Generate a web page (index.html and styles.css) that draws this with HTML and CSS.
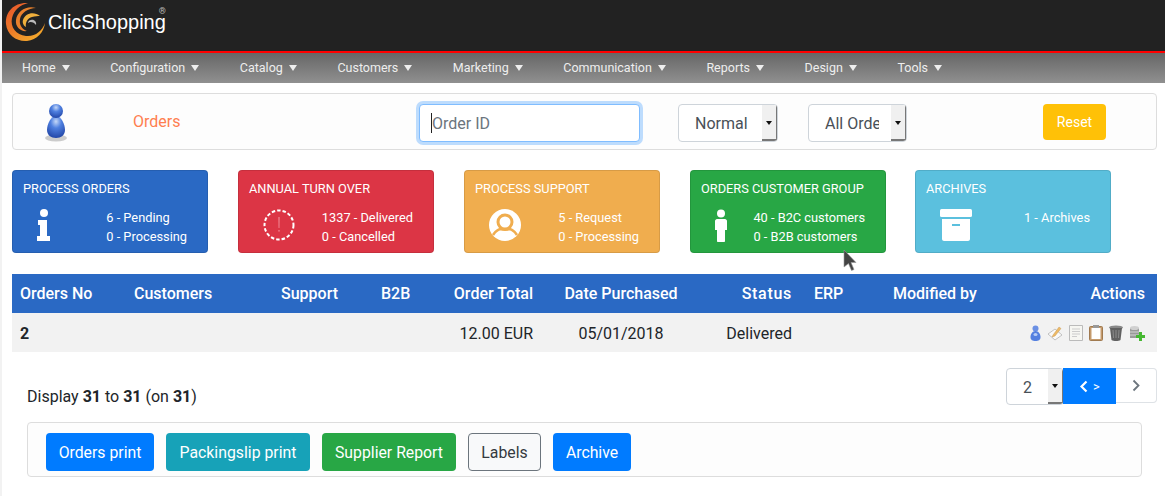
FILE: index.html
```html
<!DOCTYPE html>
<html lang="en">
<head>
    <meta charset="UTF-8">
    <meta name="viewport" content="width=device-width, initial-scale=1.0">
    <title>ClicShopping - Orders</title>
    <link rel="stylesheet" href="styles.css">
</head>
<body>
    <header class="topbar">
        <svg class="logo-mark" width="42" height="41" viewBox="0 0 42 41">
            <defs>
                <linearGradient id="swirl" x1="0" y1="0" x2="0.7" y2="1">
                    <stop offset="0" stop-color="#e8542c"/>
                    <stop offset="0.55" stop-color="#ec7a28"/>
                    <stop offset="1" stop-color="#f3a92c"/>
                </linearGradient>
            </defs>
            <path d="M24 2C11 1 1 10 2 23c1 11 11 18 21 17 10-1 17-9 18-18-3 8-10 14-19 13C12 34 6 26 8 17 10 9 16 4 24 2z" fill="url(#swirl)"/>
            <path d="M32 7C23 4 13 10 12 19c-1 7 5 12 11 11-5-2-8-6-7-12 1-6 8-11 16-11z" fill="#e9802c"/>
            <path d="M36 15c-6-5-15-3-17 4-1 3 1 6 3 7-1-5 2-9 6-10 3-1 6-1 8-1z" fill="#f0b03c"/>
            <path d="M32 24c1-3-2-6-5-5-2 0-3 2-3 3 2-2 6-1 8 2z" fill="#bbb"/>
        </svg>
        <span class="logo-text">ClicShopping</span>
        <span class="logo-reg">®</span>
    </header>
    <nav class="mainnav">
        <a href="#">Home</a>
        <a href="#">Configuration</a>
        <a href="#">Catalog</a>
        <a href="#">Customers</a>
        <a href="#">Marketing</a>
        <a href="#">Communication</a>
        <a href="#">Reports</a>
        <a href="#">Design</a>
        <a href="#">Tools</a>
    </nav>

    <main class="content">
        <div class="filterbar">
            <svg class="orders-icon" width="24" height="38" viewBox="0 0 24 38">
                <defs>
                    <radialGradient id="blueball" cx="0.5" cy="0.25" r="0.75">
                        <stop offset="0" stop-color="#c5d8f8"/>
                        <stop offset="0.4" stop-color="#4f80e0"/>
                        <stop offset="1" stop-color="#2347a8"/>
                    </radialGradient>
                </defs>
                <ellipse cx="12" cy="34" rx="11" ry="3.500" fill="#ccc"/>
                <path d="M12 12c5 0 9 8 9 14 0 5-4 8-9 8s-9-3-9-8c0-6 4-14 9-14z" fill="url(#blueball)"/>
                <circle cx="12" cy="7" r="7" fill="url(#blueball)"/>
            </svg>
            <h1 class="page-title">Orders</h1>
            <div class="search-wrap">
                <input class="search-input" type="text" placeholder="Order ID">
                <span class="caret"></span>
            </div>
            <div class="fake-select select-normal"><span class="select-value">Normal</span><span class="select-arrow"></span></div>
            <div class="fake-select select-all"><span class="select-value">All Orders</span><span class="select-arrow"></span></div>
            <a href="#" class="btn btn-warning btn-reset">Reset</a>
        </div>

        <section class="stats">
            <div class="stat stat-blue">
                <div class="stat-title">Process Orders</div>
                <div class="stat-row">
                    <div class="stat-icon">
                        <svg width="13" height="32" viewBox="0 0 13 32" fill="#fff">
                            <circle cx="7" cy="4" r="4"/>
                            <path d="M1 11h9v16h3v5H0v-5h3V16H1z"/>
                        </svg>
                    </div>
                    <div class="stat-text"><div>6 - Pending</div><div>0 - Processing</div></div>
                </div>
            </div>
            <div class="stat stat-red">
                <div class="stat-title">Annual Turn Over</div>
                <div class="stat-row">
                    <div class="stat-icon stat-icon-wide">
                        <svg width="32" height="32" viewBox="0 0 32 32">
                            <circle cx="16" cy="16" r="14.500" fill="none" stroke="#fff" stroke-width="2" stroke-dasharray="3.500 2"/>
                            <path d="M15.300 8h1.400l-.2 11h-1z" fill="#ee7f8a"/>
                            <rect x="15.300" y="21" width="1.400" height="1.600" fill="#ee7f8a"/>
                        </svg>
                    </div>
                    <div class="stat-text"><div>1337 - Delivered</div><div>0 - Cancelled</div></div>
                </div>
            </div>
            <div class="stat stat-orange">
                <div class="stat-title">Process Support</div>
                <div class="stat-row">
                    <div class="stat-icon stat-icon-wide">
                        <svg width="32" height="32" viewBox="0 0 32 32">
                            <circle cx="16" cy="16" r="16" fill="#fff"/>
                            <circle cx="16" cy="13" r="7" fill="none" stroke="#f0ad4e" stroke-width="3"/>
                            <path d="M4 26c3-5 7-6 8-6 1 1 7 1 8 0 1 0 5 1 8 6" fill="none" stroke="#f0ad4e" stroke-width="2.500"/>
                        </svg>
                    </div>
                    <div class="stat-text"><div>5 - Request</div><div>0 - Processing</div></div>
                </div>
            </div>
            <div class="stat stat-green">
                <div class="stat-title">Orders Customer Group</div>
                <div class="stat-row">
                    <div class="stat-icon">
                        <svg width="12" height="33" viewBox="0 0 12 33" fill="#fff">
                            <circle cx="6" cy="4.500" r="4"/>
                            <path d="M2 10h8c1 0 2 1 2 2v9h-2v11c0 .6-.4 1-1 1H3c-.6 0-1-.4-1-1V21H0v-9c0-1 1-2 2-2z"/>
                        </svg>
                    </div>
                    <div class="stat-text"><div>40 - B2C customers</div><div>0 - B2B customers</div></div>
                </div>
            </div>
            <div class="stat stat-cyan">
                <div class="stat-title">Archives</div>
                <div class="stat-row">
                    <div class="stat-icon stat-icon-wide">
                        <svg width="32" height="32" viewBox="0 0 32 32" fill="#fff">
                            <rect x="0" y="0" width="32" height="8" rx="1.500"/>
                            <path d="M2 10h28v20c0 1-1 2-2 2H4c-1 0-2-1-2-2z"/>
                            <rect x="12" y="15" width="8" height="2" fill="#5bc0de"/>
                        </svg>
                    </div>
                    <div class="stat-text"><div>1 - Archives</div></div>
                </div>
            </div>
        </section>

        <table class="orders">
            <colgroup>
                <col class="col-no"><col class="col-cust"><col class="col-support"><col class="col-b2b">
                <col class="col-total"><col class="col-date"><col class="col-status"><col class="col-erp">
                <col class="col-mod"><col class="col-actions">
            </colgroup>
            <thead>
                <tr>
                    <th>Orders No</th>
                    <th>Customers</th>
                    <th>Support</th>
                    <th>B2B</th>
                    <th class="right">Order Total</th>
                    <th class="center">Date Purchased</th>
                    <th class="right th-status">Status</th>
                    <th>ERP</th>
                    <th>Modified by</th>
                    <th class="right cell-actions">Actions</th>
                </tr>
            </thead>
            <tbody>
                <tr>
                    <td class="order-no">2</td>
                    <td></td>
                    <td></td>
                    <td></td>
                    <td class="right">12.00 EUR</td>
                    <td class="center">05/01/2018</td>
                    <td class="right">Delivered</td>
                    <td></td>
                    <td></td>
                    <td class="right cell-actions">
                        <div class="actions">
                            <svg width="11" height="16" viewBox="0 0 11 16">
                                <circle cx="5.500" cy="3.500" r="3" fill="#6b90e4"/>
                                <path d="M5.500 6c3 0 5 3 5 6 0 3-2 4-5 4s-5-1-5-4c0-3 2-6 5-6z" fill="#5480e0"/>
                                <ellipse cx="5.500" cy="9.500" rx="2" ry="1.500" fill="#b8cdf4"/>
                            </svg>
                            <svg width="16" height="16" viewBox="0 0 16 16">
                                <path d="M1 9l7-5 7 6-7 5z" fill="#fafafa" stroke="#b4b4b4" stroke-width=".8"/>
                                <path d="M6 10l6-8 2 1.500-6 7.500-3 1z" fill="#eebb66" stroke="#c09050" stroke-width=".4"/>
                            </svg>
                            <svg width="14" height="16" viewBox="0 0 14 16">
                                <path d="M.5.5h13v15H.5z" fill="#f6f6f2" stroke="#bbb"/>
                                <path d="M3 4h8M3 6.500h8M3 9h8M3 11.500h5" stroke="#ccc"/>
                            </svg>
                            <svg width="14" height="16" viewBox="0 0 14 16">
                                <rect x=".5" y="1.500" width="13" height="14" rx="1" fill="#c49a6c" stroke="#a07a50"/>
                                <rect x="2.500" y="3" width="9" height="11" fill="#fff"/>
                                <rect x="4" y="0" width="6" height="3" fill="#999"/>
                            </svg>
                            <svg width="14" height="16" viewBox="0 0 14 16">
                                <ellipse cx="7" cy="2.500" rx="7" ry="2" fill="#888"/>
                                <path d="M1 3l1.500 12c2 1.300 7 1.300 9 0L13 3z" fill="#606060"/>
                                <path d="M4 5l.5 8M7 5v8M10 5l-.5 8" stroke="#8c8c8c"/>
                            </svg>
                            <svg width="16" height="16" viewBox="0 0 16 16">
                                <path d="M1 3h9v10H1z" fill="#9a9a9a"/>
                                <ellipse cx="5.500" cy="3" rx="4.500" ry="2" fill="#d0d0d0"/>
                                <path d="M1 7h9M1 10h9" stroke="#d4d4d4"/>
                                <path d="M10 7h3v3h3v3h-3v3h-3v-3H7v-3h3z" fill="#46b832"/>
                            </svg>
                        </div>
                    </td>
                </tr>
            </tbody>
        </table>

        <div class="pager-row">
            <p class="display-count">Display <b>31</b> to <b>31</b> (on <b>31</b>)</p>
            <div class="pager">
                <div class="fake-select select-page"><span class="select-value">2</span><span class="select-arrow"></span></div>
                <a href="#" class="page-current">
                    <svg width="9" height="13" viewBox="0 0 9 13"><path d="M7.500 1.500l-5 5 5 5" fill="none" stroke="#fff" stroke-width="2.200"/></svg>
                    <span>&gt;</span>
                </a>
                <a href="#" class="page-next">
                    <svg width="8" height="13" viewBox="0 0 8 13"><path d="M1.500 1.500l5 5-5 5" fill="none" stroke="#6c757d" stroke-width="1.800"/></svg>
                </a>
            </div>
        </div>

        <div class="button-bar">
            <a href="#" class="btn btn-primary">Orders print</a>
            <a href="#" class="btn btn-info">Packingslip print</a>
            <a href="#" class="btn btn-success">Supplier Report</a>
            <a href="#" class="btn btn-light">Labels</a>
            <a href="#" class="btn btn-primary">Archive</a>
        </div>

        <svg class="cursor" width="14" height="21" viewBox="0 0 14 21">
            <path d="M1 0l12 12.500H8l3 7-2.500 1-3-7L1 17z" fill="#444" stroke="#999" stroke-width=".6"/>
        </svg>
    </main>
</body>
</html>
```

FILE: styles.css
```css
* { box-sizing: border-box; }

html { background-color: #f2f2f2; }

body {
    font-family: Roboto, "Liberation Sans", sans-serif;
    font-size: 16px;
    color: #212529;
    background-color: #fff;
    margin: 0 0 0 2px;
    height: 496px;
    overflow: hidden;
    position: relative;
}

a { text-decoration: none; }

/* top bar */
.topbar {
    height: 53px;
    background-color: #222;
    border-bottom: 2px solid #f00;
    display: flex;
    align-items: flex-start;
    padding: 1px 0 0 2px;
    color: #fff;
}
.logo-text {
    font-family: "Liberation Sans", Arial, sans-serif;
    font-size: 20px;
    margin: 10px 0 0 2px;
}
.logo-reg {
    font-size: 9px;
    color: #bbb;
    margin: 5px 0 0 -7px;
}

.mainnav {
    height: 30px;
    background: linear-gradient(#666, #909090);
    display: flex;
    align-items: center;
    padding: 0 0 2px 20px;
}
.mainnav a {
    color: #eee;
    font-size: 12.5px;
    margin-right: 40.6px;
}
.mainnav a::after {
    content: "";
    display: inline-block;
    margin-left: 6px;
    border-left: 4px solid transparent;
    border-right: 4px solid transparent;
    border-top: 6px solid #eee;
    vertical-align: 1px;
}

/* page */
.content { padding: 10px 8px 0 10px; }

.filterbar {
    height: 57px;
    border: 1px solid #ddd;
    border-radius: 4px;
    background-color: #fdfdfd;
    display: flex;
    align-items: center;
}
.orders-icon { margin: 2px 0 0 31px; flex: none; }
.page-title {
    font-size: 16px;
    font-weight: 400;
    color: #ff7f50;
    margin: 0 0 0 65px;
    width: 286px;
}
.search-wrap { position: relative; margin: 2px 38px 0 0; }
.search-input {
    display: block;
    width: 221px;
    height: 38px;
    font: 16px Roboto, sans-serif;
    padding: 2px 12px 0;
    border: 1px solid #80bdff;
    border-radius: 4px;
    box-shadow: 0 0 0 3px rgba(0, 123, 255, .25);
    outline: none;
}
.search-input::placeholder { color: #6c757d; }
.caret {
    position: absolute;
    left: 12px;
    top: 9px;
    width: 1px;
    height: 20px;
    background-color: #222;
}

.fake-select {
    display: flex;
    height: 38px;
    margin-top: 2px;
    border: 1px solid #ced4da;
    border-radius: 4px;
    background-color: #fff;
    overflow: hidden;
    flex: none;
}
.select-value {
    flex: 1;
    overflow: hidden;
    white-space: nowrap;
    padding: 9px 0 0 16px;
    color: #495057;
    line-height: 20px;
}
.select-arrow {
    width: 15px;
    background-color: #f0f0f0;
    border-right: 1px solid #777;
    border-bottom: 2px solid #777;
    position: relative;
}
.select-arrow::after {
    content: "";
    position: absolute;
    left: 4px;
    top: 16px;
    border-left: 3px solid transparent;
    border-right: 3px solid transparent;
    border-top: 4px solid #111;
}
.select-normal { width: 100px; margin-right: 30px; }
.select-all { width: 99px; }
.select-all .select-value { margin-right: 12px; }

.btn {
    display: block;
    height: 38px;
    line-height: 38px;
    text-align: center;
    border: 1px solid transparent;
    border-radius: 4px;
    color: #fff;
    font-size: 15.8px;
}
.btn-primary { background-color: #007bff; }
.btn-info { background-color: #17a2b8; }
.btn-success { background-color: #28a745; }
.btn-warning { background-color: #ffc107; }
.btn-light { background-color: #f8f9fa; border-color: #6c757d; color: #343a40; }
.btn-reset {
    width: 63px;
    margin: 0 0 0 136px;
    height: 36px;
    line-height: 34px;
    font-size: 14px;
}

/* stat cards */
.stats {
    display: flex;
    gap: 30px;
    margin-top: 20px;
}
.stat {
    width: 196px;
    height: 83px;
    flex: none;
    border-radius: 4px;
    border: 1px solid rgba(0, 0, 0, .1);
    color: #fff;
    padding: 10px 0 0 10px;
}
.stat-green { margin-right: -1px; }
.stat-blue { background-color: #2a69c4; }
.stat-red { background-color: #dc3545; }
.stat-orange { background-color: #f0ad4e; }
.stat-green { background-color: #28a745; }
.stat-cyan { background-color: #5bc0de; }
.stat-title {
    font-size: 12.8px;
    line-height: 15px;
    text-transform: uppercase;
}
.stat-row {
    display: flex;
    justify-content: space-between;
    align-items: flex-start;
    padding-right: 20px;
    margin-top: 13px;
}
.stat-icon { width: 40px; text-align: center; height: 33px; }
.stat-icon-wide { width: 60px; }
.stat-icon svg { display: block; margin: 0 auto; }
.stat-text {
    font-size: 12.8px;
    line-height: 19px;
    margin-top: -1px;
    min-width: 0;
}

/* orders table */
.orders {
    width: 1145px;
    table-layout: fixed;
    border-collapse: collapse;
    margin-top: 21px;
}
.col-no { width: 114px; }
.col-cust { width: 147px; }
.col-support { width: 100px; }
.col-b2b { width: 72px; }
.col-total { width: 96px; }
.col-date { width: 160px; }
.col-status { width: 105px; }
.col-erp { width: 79px; }
.col-mod { width: 120px; }
.col-actions { width: 152px; }
.orders th {
    background-color: #2a69c4;
    color: #fff;
    font-weight: 500;
    text-align: left;
    height: 39px;
    padding: 0 8px;
    white-space: nowrap;
}
.orders td {
    background-color: #f2f2f2;
    height: 39px;
    padding: 1px 8px 0;
    white-space: nowrap;
}
.orders .right { text-align: right; }
.orders .center { text-align: center; }
.orders th:nth-child(7), .orders td:nth-child(7) { padding-right: 14px; }
.orders .cell-actions { padding-right: 12px; }
.th-status { letter-spacing: .7px; }
.order-no { font-weight: 700; }
.actions {
    display: flex;
    justify-content: flex-end;
    align-items: center;
    gap: 6px;
}

/* pagination */
.pager-row {
    display: flex;
    justify-content: space-between;
    align-items: flex-start;
    margin-top: 16px;
    padding-left: 15px;
}
.display-count { margin: 19px 0 0; line-height: 19px; }
.pager { display: flex; align-items: flex-start; }
.select-page { width: 58px; height: 37px; margin-top: 0; }
.select-page .select-value { padding-top: 9px; }
.select-page .select-arrow::after { top: 15px; }
.page-current {
    width: 53px;
    height: 36px;
    margin-left: -1px;
    background-color: #007bff;
    color: #fff;
    display: flex;
    align-items: center;
    justify-content: center;
    gap: 5px;
    font-size: 13px;
}
.page-next {
    width: 41px;
    height: 35px;
    border: 1px solid #dee2e6;
    border-left: 0;
    border-radius: 0 4px 4px 0;
    background-color: #fff;
    display: flex;
    align-items: center;
    justify-content: center;
}

.button-bar {
    width: 1115px;
    height: 55px;
    margin: 16px 0 0 15px;
    border: 1px solid #ddd;
    border-radius: 4px;
    background-color: #fdfdfd;
    padding: 10px 18px;
    display: grid;
    grid-template-columns: 108px 144px 134px 73px 78px;
    gap: 12px;
}

.cursor {
    position: absolute;
    left: 841px;
    top: 250px;
}
```
